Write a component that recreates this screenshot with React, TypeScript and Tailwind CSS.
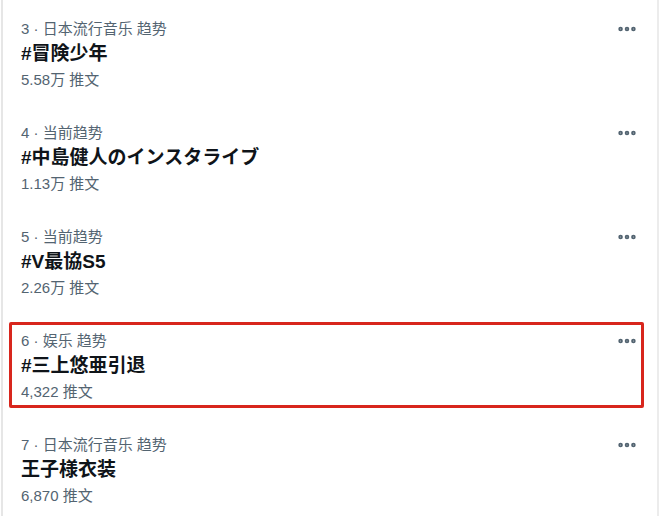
import { MoreHorizontal } from 'lucide-react'

const trends = [
  { rank: 3, category: '日本流行音乐 趋势', title: '#冒険少年', count: '5.58万 推文' },
  { rank: 4, category: '当前趋势', title: '#中島健人のインスタライブ', count: '1.13万 推文' },
  { rank: 5, category: '当前趋势', title: '#V最協S5', count: '2.26万 推文' },
  { rank: 6, category: '娱乐 趋势', title: '#三上悠亜引退', count: '4,322 推文', marked: true },
  { rank: 7, category: '日本流行音乐 趋势', title: '王子様衣装', count: '6,870 推文' },
]

const font = { fontFamily: '"Liberation Sans", "Noto Sans CJK SC", sans-serif' }

export default function App() {
  return (
    <div
      className="w-[660px] h-[516px] overflow-hidden bg-white flex"
      style={font}
    >
      <div className="w-[2px] bg-[#e6e6e6] ml-[1px]" />
      <div className="flex-1 flex flex-col">
        {trends.map((t) => (
          <div
            key={t.rank}
            className="relative h-[104px] shrink-0 pl-[18px] pr-[19px] pt-[19px] flex justify-between"
          >
            <div className="flex flex-col">
              <span className="text-[15px] leading-[20px] text-[#536471]">
                {t.rank} · {t.category}
              </span>
              <span className="mt-[3px] text-[19px] leading-[24px] font-bold text-[#0f1419]">
                {t.title}
              </span>
              <span className="mt-[4px] text-[15px] leading-[20px] text-[#536471]">
                {t.count}
              </span>
            </div>
            <MoreHorizontal
              className="w-[22px] h-[22px] text-[#536471] -mt-[1px]"
              strokeWidth={3}
            />
            {t.marked && (
              <div className="absolute left-[6px] top-[10px] w-[635px] h-[86px] border-[3px] border-[#d8261d] rounded-[2px]" />
            )}
          </div>
        ))}
      </div>
      <div className="w-[2px] bg-[#ececec] mr-[1px]" />
    </div>
  )
}
